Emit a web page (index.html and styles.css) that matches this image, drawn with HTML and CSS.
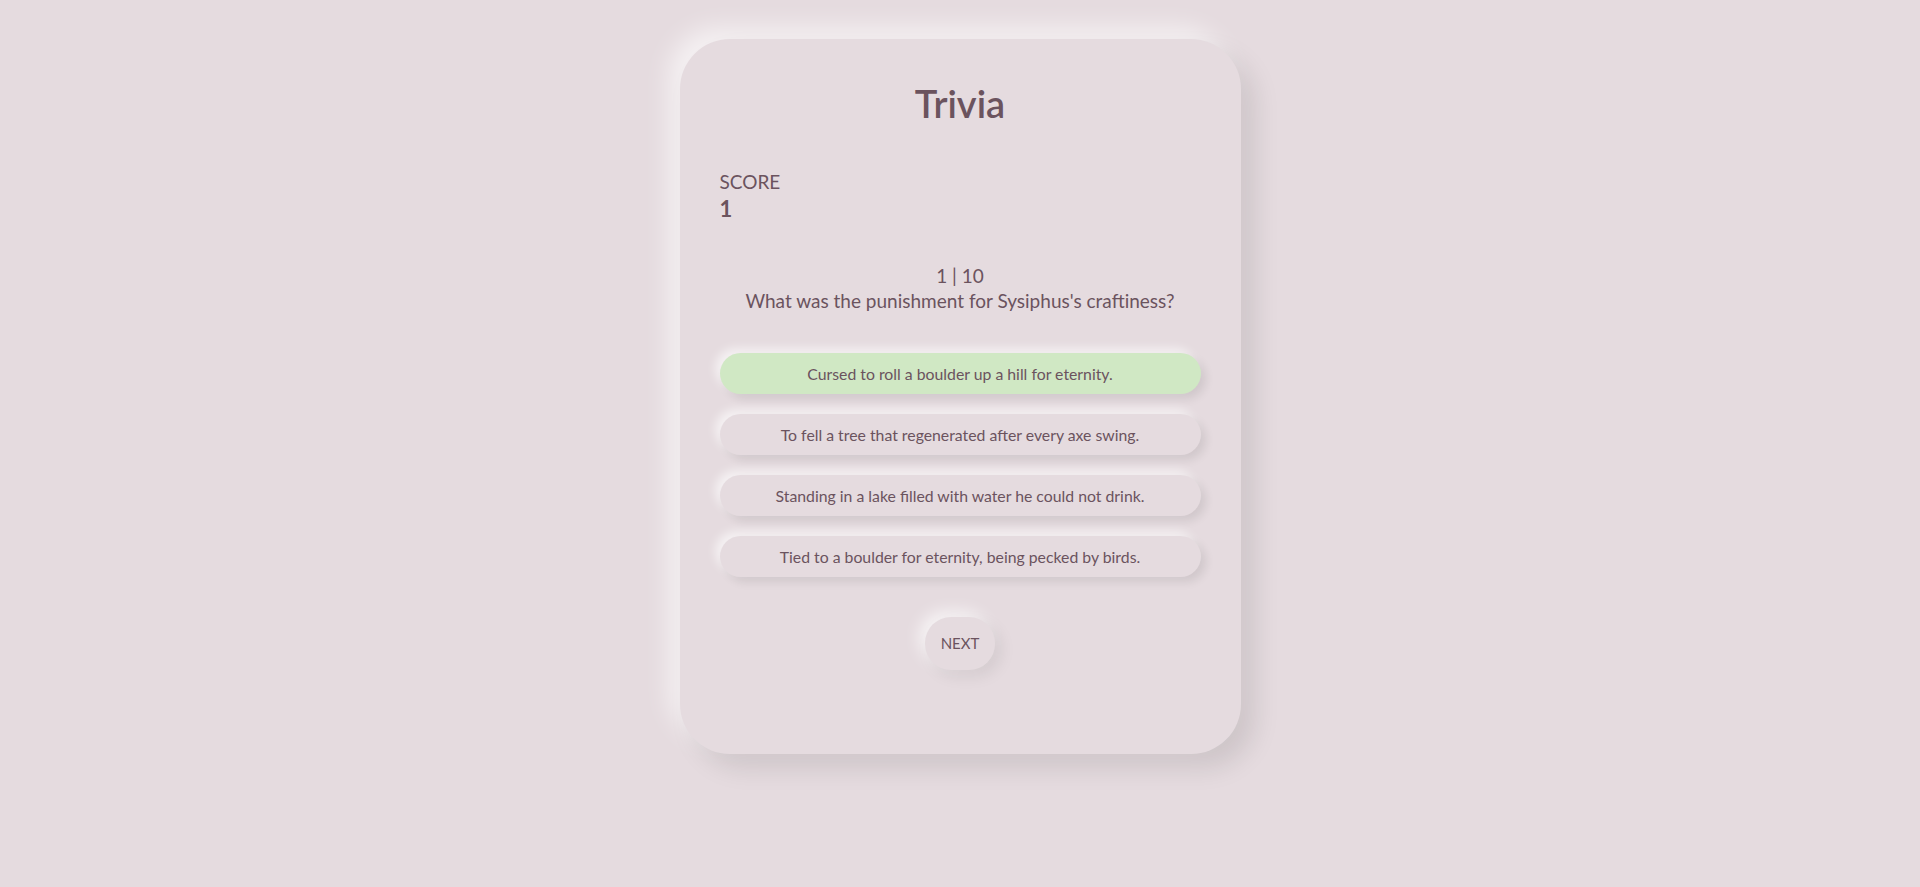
FILE: index.html
```html
<!DOCTYPE html>
<html lang="en">
<head>
<meta charset="utf-8">
<title>Trivia</title>
<link rel="stylesheet" href="styles.css">
</head>
<body>
<main class="card">
  <h1 class="title">Trivia</h1>
  <section class="score">
    <div class="score-label">SCORE</div>
    <div class="score-value">1</div>
  </section>
  <section class="question">
    <div class="progress">1 | 10</div>
    <div class="question-text">What was the punishment for Sysiphus's craftiness?</div>
  </section>
  <ul class="answers">
    <li class="answer correct">Cursed to roll a boulder up a hill for eternity.</li>
    <li class="answer">To fell a tree that regenerated after every axe swing.</li>
    <li class="answer">Standing in a lake filled with water he could not drink.</li>
    <li class="answer">Tied to a boulder for eternity, being pecked by birds.</li>
  </ul>
  <div class="actions">
    <button class="next">NEXT</button>
  </div>
</main>
</body>
</html>
```
FILE: styles.css
```css
* { box-sizing: border-box; }
html, body {
  margin: 0;
  padding: 0;
  background: #e5dbdf;
  font-family: Lato, "Noto Sans", sans-serif;
  color: #6b535e;
}
body { padding-top: 39px; min-height: 887px; }
.card {
  width: 561px;
  margin: 0 auto;
  padding: 41px 40px 84px;
  border-radius: 50px;
  background: #e5dbdf;
  box-shadow: 14px 14px 26px rgba(0,0,0,0.1), -12px -12px 24px rgba(255,255,255,0.6);
}
.title {
  margin: 0;
  font-size: 38px;
  line-height: 46px;
  font-weight: 600;
  text-align: center;
}
.score { margin-top: 44px; }
.score-label { font-size: 19px; line-height: 24px; }
.score-value { font-size: 22px; line-height: 30px; font-weight: 700; }
.question {
  margin-top: 39px;
  text-align: center;
  font-size: 19px;
  line-height: 25px;
}
.answers {
  list-style: none;
  margin: 40px 0 0;
  padding: 0;
  display: flex;
  flex-direction: column;
  gap: 20px;
}
.answer {
  height: 41px;
  display: flex;
  align-items: center;
  justify-content: center;
  border-radius: 21px;
  font-size: 15.8px;
  background: #e5dbdf;
  box-shadow: 5px 5px 10px rgba(0,0,0,0.09), -5px -5px 10px rgba(255,255,255,0.6);
}
.answer.correct { background: #d0e8c4; }
.actions {
  margin-top: 40px;
  display: flex;
  justify-content: center;
}
.next {
  font-family: inherit;
  color: #6b535e;
  font-size: 15px;
  line-height: 21px;
  padding: 16px;
  border: none;
  border-radius: 26px;
  background: #e5dbdf;
  box-shadow: 6px 6px 16px rgba(0,0,0,0.08), -6px -6px 16px rgba(255,255,255,0.7);
}
```
